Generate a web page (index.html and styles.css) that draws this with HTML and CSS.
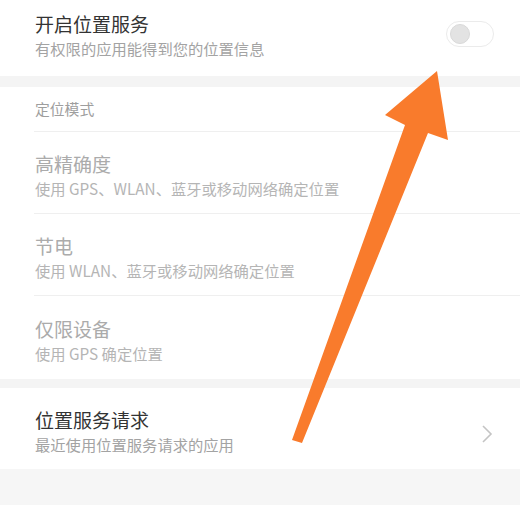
FILE: index.html
```html
<!DOCTYPE html>
<html lang="zh">
<head>
<meta charset="utf-8">
<title>位置服务</title>
<link rel="stylesheet" href="styles.css">
</head>
<body>
<div class="page">
  <section class="card">
    <div class="row top">
      <div class="texts">
        <div class="title dark">开启位置服务</div>
        <div class="sub">有权限的应用能得到您的位置信息</div>
      </div>
      <div class="toggle"><span class="knob"></span></div>
    </div>
  </section>
  <div class="gap"></div>
  <section class="card">
    <div class="header">定位模式</div>
    <div class="row item divided">
      <div class="texts">
        <div class="title off">高精确度</div>
        <div class="sub off">使用 GPS、WLAN、蓝牙或移动网络确定位置</div>
      </div>
    </div>
    <div class="row item divided">
      <div class="texts">
        <div class="title off">节电</div>
        <div class="sub off">使用 WLAN、蓝牙或移动网络确定位置</div>
      </div>
    </div>
    <div class="row item last">
      <div class="texts">
        <div class="title off">仅限设备</div>
        <div class="sub off">使用 GPS 确定位置</div>
      </div>
    </div>
  </section>
  <div class="gap small"></div>
  <section class="card">
    <div class="row req">
      <div class="texts">
        <div class="title dark">位置服务请求</div>
        <div class="sub">最近使用位置服务请求的应用</div>
      </div>
      <svg class="chev" width="12" height="20" viewBox="0 0 12 20"><path d="M2 2 L10 10 L2 18" fill="none" stroke="#c4c4c4" stroke-width="1.6"/></svg>
    </div>
  </section>
  <svg class="arrow" width="520" height="505" viewBox="0 0 520 505">
    <polygon points="437,71 448,140 428,133 302,443 292,440 405,125 385,115" fill="#f97b2c"/>
  </svg>
</div>
</body>
</html>
```

FILE: styles.css
```css
html, body {
  margin: 0;
  padding: 0;
}
body {
  background: #f6f6f6;
  font-family: "Noto Sans CJK SC", "Noto Sans", sans-serif;
  width: 520px;
  height: 505px;
  overflow: hidden;
}
.page {
  position: relative;
  width: 520px;
  height: 505px;
}
.card {
  background: #ffffff;
}
.gap {
  height: 11px;
  background: #f4f4f4;
}
.gap.small {
  height: 9px;
}
.row {
  display: flex;
  align-items: center;
  justify-content: space-between;
  padding-left: 35px;
  padding-right: 26px;
}
.texts {
  display: flex;
  flex-direction: column;
}
.title {
  font-size: 19px;
  line-height: 24px;
  color: #333333;
}
.title.off {
  color: #ababab;
}
.sub {
  font-size: 15.3px;
  line-height: 24px;
  color: #a3a3a3;
  letter-spacing: 0;
}
.sub.off {
  color: #b5b5b5;
}
.top {
  height: 76px;
  box-sizing: border-box;
  padding-top: 12px;
  padding-bottom: 16px;
}
.toggle {
  width: 48px;
  height: 26px;
  box-sizing: border-box;
  border: 1.5px solid #ebebeb;
  border-radius: 13px;
  background: #fff;
  display: flex;
  align-items: center;
  padding-left: 3px;
  margin-top: -4px;
}
.knob {
  width: 20px;
  height: 20px;
  border-radius: 50%;
  background: #e3e3e3;
  box-sizing: border-box;
  border: 1px solid #d9d9d9;
}
.header {
  height: 44px;
  line-height: 44px;
  margin-left: 34px;
  padding-left: 1px;
  font-size: 14.8px;
  color: #9e9e9e;
  border-bottom: 1px solid #efefef;
}
.item {
  height: 82px;
  box-sizing: border-box;
  padding-top: 6px;
  position: relative;
}
.divided::after {
  content: "";
  position: absolute;
  left: 34px;
  right: 0;
  bottom: 0;
  height: 1px;
  background: #efefef;
}
.item.last {
  height: 83px;
}
.req {
  height: 81px;
  box-sizing: border-box;
  padding-top: 7px;
  padding-right: 27px;
}
.chev {
  display: block;
  margin-top: 3px;
}
.arrow {
  position: absolute;
  left: 0;
  top: 0;
  pointer-events: none;
}
```
